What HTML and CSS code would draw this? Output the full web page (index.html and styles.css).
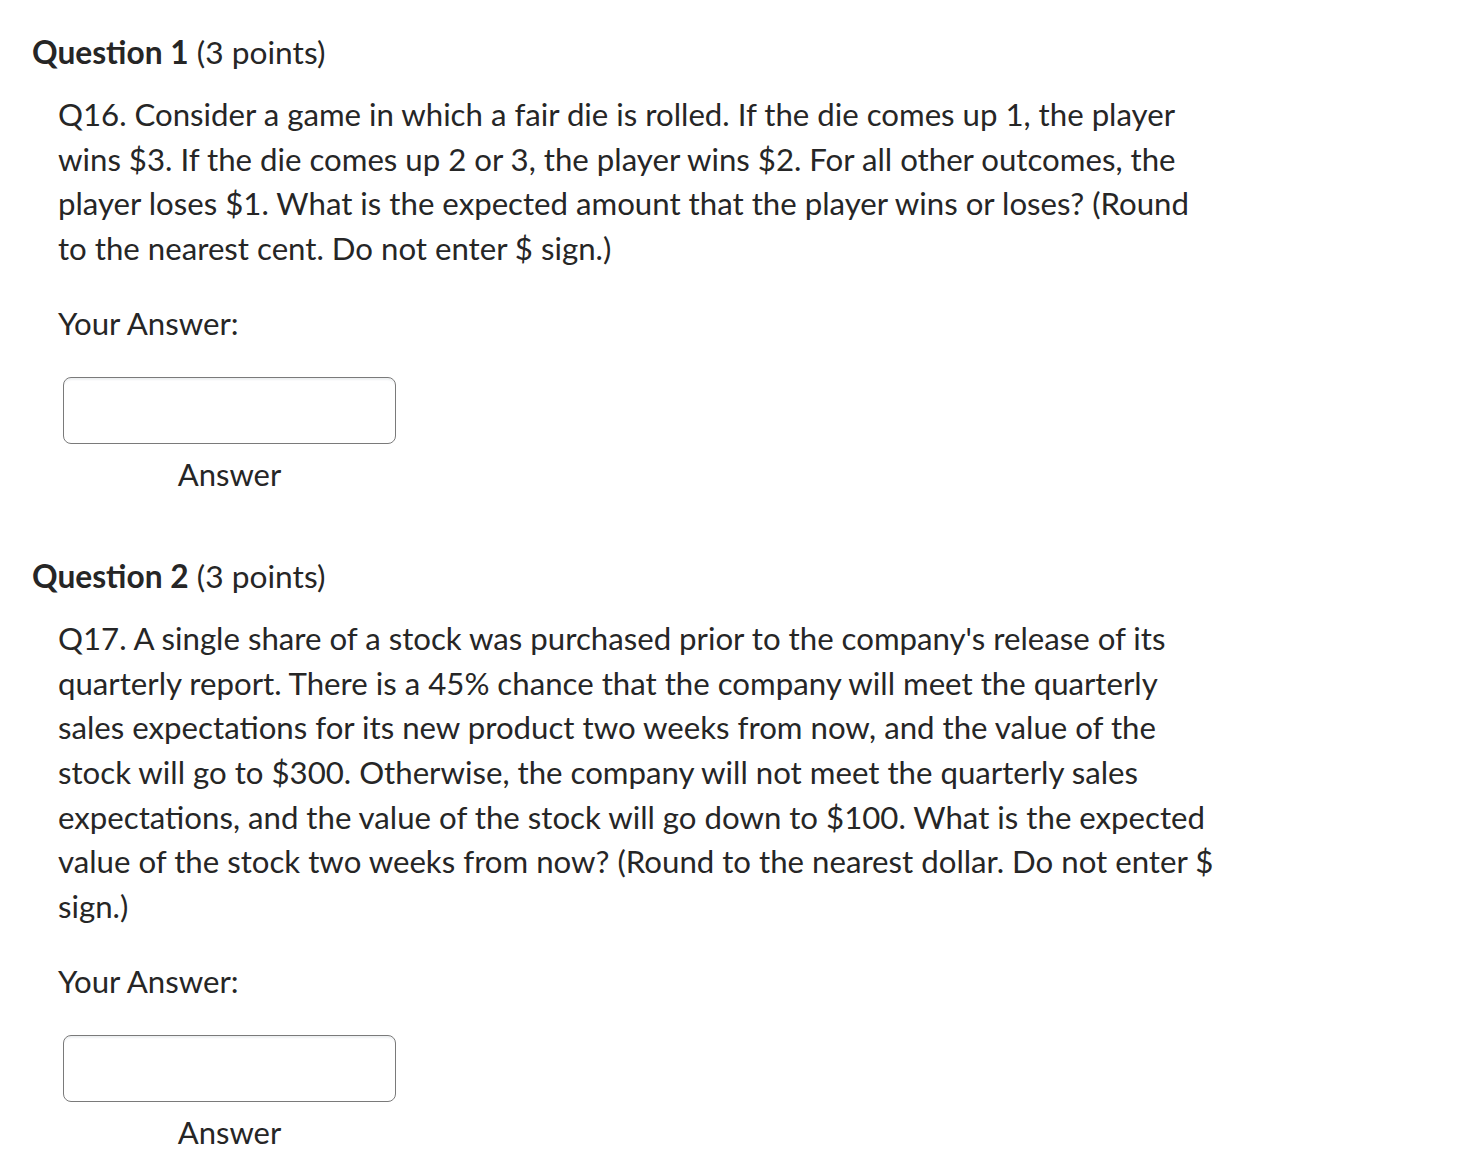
FILE: index.html
```html
<!DOCTYPE html>
<html lang="en">
<head>
<meta charset="utf-8">
<title>Quiz</title>
<link rel="stylesheet" href="styles.css">
</head>
<body>
<main class="quiz">
  <section class="question">
    <h2 class="q-head"><span class="q-title">Question 1</span> (3 points)</h2>
    <div class="q-body">
      <p class="q-text">Q16. Consider a game in which a fair die is rolled. If the die comes up 1, the player wins $3. If the die comes up 2 or 3, the player wins $2. For all other outcomes, the player loses $1. What is the expected amount that the player wins or loses? (Round to the nearest cent. Do not enter $ sign.)</p>
      <p class="your-answer">Your Answer:</p>
      <div class="answer-field">
        <input class="answer-input" type="text" aria-label="Answer">
        <span class="answer-label">Answer</span>
      </div>
    </div>
  </section>
  <section class="question">
    <h2 class="q-head"><span class="q-title">Question 2</span> (3 points)</h2>
    <div class="q-body">
      <p class="q-text">Q17. A single share of a stock was purchased prior to the company's release of its quarterly report. There is a 45% chance that the company will meet the quarterly sales expectations for its new product two weeks from now, and the value of the stock will go to $300. Otherwise, the company will not meet the quarterly sales expectations, and the value of the stock will go down to $100. What is the expected value of the stock two weeks from now? (Round to the nearest dollar. Do not enter $ sign.)</p>
      <p class="your-answer">Your Answer:</p>
      <div class="answer-field">
        <input class="answer-input" type="text" aria-label="Answer">
        <span class="answer-label">Answer</span>
      </div>
    </div>
  </section>
</main>
</body>
</html>
```

FILE: styles.css
```css
html, body {
  margin: 0;
  padding: 0;
  background: #ffffff;
}

body {
  font-family: Lato, "Open Sans", sans-serif;
  color: #262626;
}

.quiz {
  padding: 30px 0 0 32px;
}

.question {
  margin-bottom: 62px;
}

.question:last-child {
  margin-bottom: 0;
}

.q-head {
  margin: 0;
  font-size: 31.7px;
  line-height: 44px;
  font-weight: 400;
  color: #262626;
}

.q-title {
  font-weight: 700;
}

.q-body {
  padding-left: 26px;
  margin-top: 18px;
}

.q-text {
  margin: 0;
  max-width: 1158px;
  font-size: 31.2px;
  line-height: 44.7px;
}

.your-answer {
  margin: 30px 0 0;
  font-size: 31.2px;
  line-height: 44px;
}

.answer-field {
  display: flex;
  flex-direction: column;
  align-items: center;
  width: 333px;
  margin: 32px 0 0 5px;
}

.answer-input {
  box-sizing: border-box;
  width: 333px;
  height: 67px;
  margin: 0;
  border: 1px solid #7a7a7a;
  border-radius: 8px;
  background: #ffffff;
  box-shadow: inset 0 3px 2px -1px #eef0f2;
  font: inherit;
  outline: none;
}

.answer-label {
  margin-top: 12px;
  font-size: 31px;
  line-height: 36px;
}
```
